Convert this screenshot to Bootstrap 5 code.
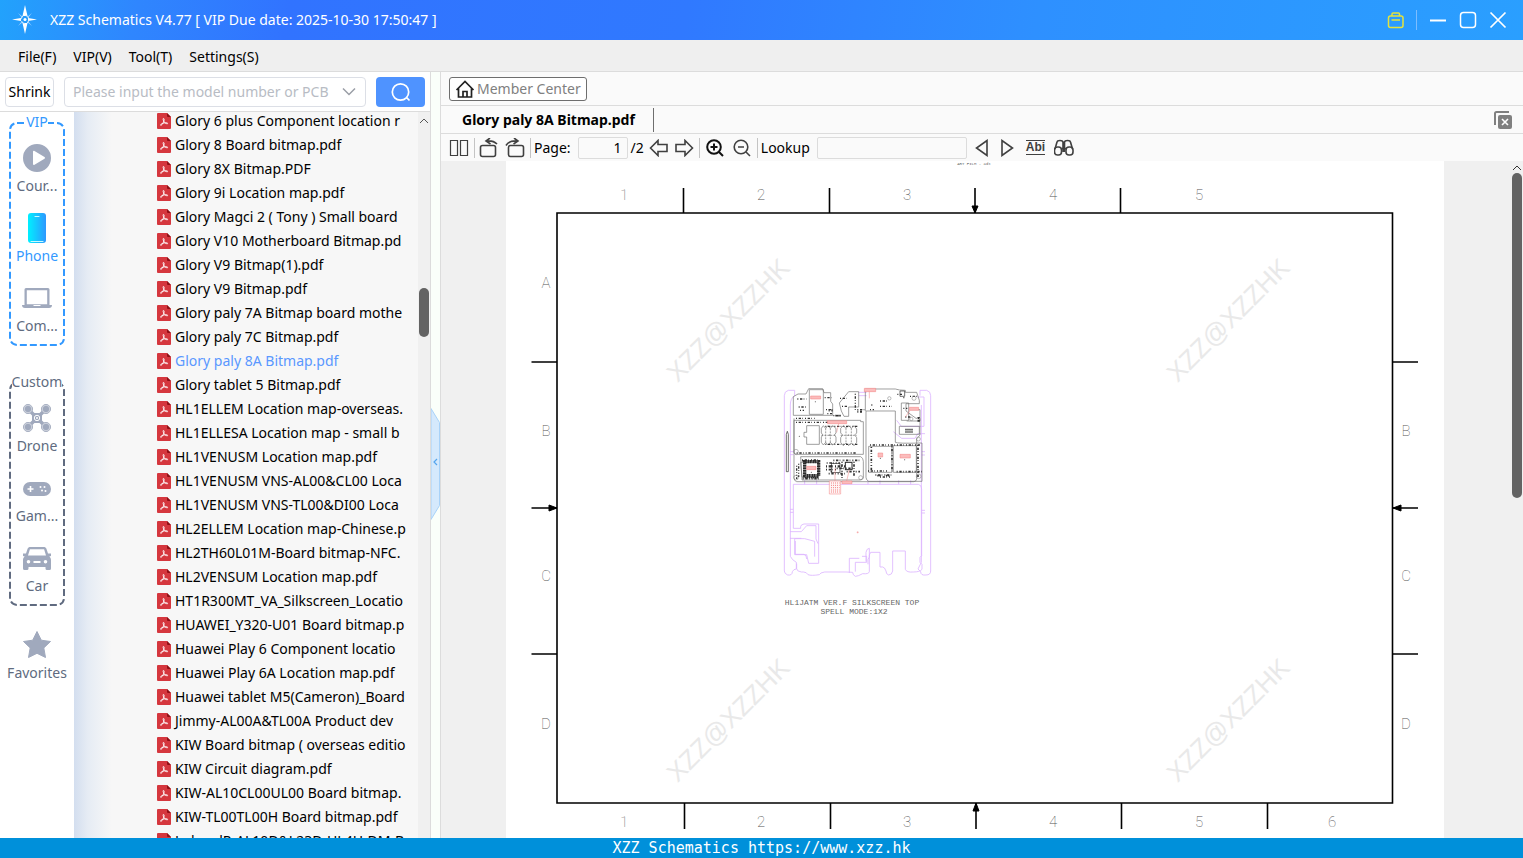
<!DOCTYPE html>
<html lang="en">
<head>
<meta charset="utf-8">
<meta name="viewport" content="width=device-width, initial-scale=1">
<title>XZZ Schematics V4.77</title>
<link href="https://cdn.jsdelivr.net/npm/bootstrap@5.3.0/dist/css/bootstrap.min.css" rel="stylesheet">
<style>
  body { font-family: "Noto Sans", "Open Sans", sans-serif; font-size: 14px; line-height: 20px; color: #000; }
  button { font: inherit; color: inherit; }
  svg { display: block; flex: none; }
  .app-bar { height: 40px; color: #fff; padding: 0 16px 0 12px; background: linear-gradient(100deg, #22a2fc 0, #2f86fe 9%, #3173ff 19%, #3079ff 45%, #2e90ff 68%, #2a9fff 100%); }
  .ghost { background: none; border: 0; padding: 0; }
  .menu-bar { height: 32px; background: #efefef; border-bottom: 1px solid #dcdcdc; padding: 2px 0 0 18px; gap: 17px; }
  .menu-bar a { color: #000; text-decoration: none; }
  .side { width: 431px; border-right: 1px solid #dcdcdc; }
  .side-search { height: 40px; border-bottom: 1px solid #dcdcdc; padding: 0 5px; gap: 10px; }
  .shrink-btn { height: 30px; width: 49px; background: #fff; border: 1px solid #dcdfe6; border-radius: 4px; padding: 1px 0 0; }
  .combo { height: 30px; border: 1px solid #dcdfe6; border-radius: 4px; padding: 0 9px 0 8px; }
  .combo input { border: 0; outline: 0; padding: 1px 0 0; min-width: 0; background: none; }
  .combo input::placeholder { color: #b8bcc4; opacity: 1; }
  .search-btn { height: 30px; width: 49px; border: 0; border-radius: 4px; background: #4f93ff; }
  .rail { width: 74px; color: #606b80; }
  .group-box { width: 56px; margin: 0 auto 26px; padding-bottom: 4px; }
  .group-name { height: 20px; }
  .group-name span { background: #fff; z-index: 1; }
  .group-line { inset: 10px 0 0 0; width: 100%; height: calc(100% - 10px); }
  .group-line rect { fill: none; stroke-width: 2; stroke-dasharray: 7 3; width: calc(100% - 2px); height: calc(100% - 2px); }
  .vip-name, .rail-item.active { color: #3399ff; }
  .rail-item { height: 70px; width: 100%; padding: 11px 0 6px; gap: 3px; position: relative; z-index: 1; white-space: nowrap; }
  .rail-item svg { fill: #a0a9bd; }
  .tree { background: linear-gradient(90deg, #d3deef 0, #e6ecf4 14px, #f7f7f7 38px, #f7f7f7 100%); }
  .tree ul { margin: -3px 8px 0 83px; }
  .tree a { height: 24px; gap: 3px; color: #000; text-decoration: none; white-space: nowrap; }
  .tree a.picked { color: #5a98ff; }
  .track { width: 12px; background: #f0f0f0; padding-top: 5px; }
  .thumb { width: 10px; border-radius: 5px; background: #636363; }
  .side .thumb { height: 49px; margin-top: 163px; }
  .view .track { padding-top: 3px; }
  .view .thumb { height: 325px; margin-top: 1px; }
  .splitter { width: 10px; background: #fafffa; border: 0; border-right: 1px solid #dcdcdc; padding: 18px 0 0; }
  .viewer { background: #fafafa; }
  .center-row { height: 34px; border-bottom: 1px solid #dcdcdc; padding-left: 8px; }
  .center-btn { height: 24px; background: #fff; border: 1px solid #6e6e6e; border-radius: 3px; color: #808080; padding: 0 5px; gap: 2px; }
  .file-row { height: 28px; border-bottom: 1px solid #dcdcdc; padding: 0 11px 0 21px; }
  .file-tab { height: 24px; border-right: 1px solid #6e6e6e; padding-right: 18px; }
  .tools { height: 27px; padding-left: 8px; gap: 5px; }
  .tools input { height: 22px; border: 1px solid #dcdcdc; border-radius: 2px; background: #fafafa; padding: 0 5px; margin-left: 2px; }
  .tools .page-no { width: 50px; margin-right: -2px; }
  .look { width: 150px; }
  .rule { width: 1px; height: 20px; background: #c4c4c4; margin-right: -2px; }
  .title-rule { width: 1px; height: 20px; background: #7dbdff; margin: 0 12px 0 11px; }
  .tools svg { fill: none; stroke: #404040; stroke-width: 1.6; }
  .tools svg.thin { stroke-width: 1.2; }
  .tools svg.strong { stroke: #111; stroke-width: 2; }
  .whole-word { padding: 0 4px; }
  .whole-word span { display: block; border: solid #404040; border-width: 1px 0; font: bold 12px/13px "Liberation Sans", sans-serif; color: #404040; }
  .view { background: #f0f0f0; }
  .sheet { background: #fff; margin: 0 67px 0 65px; width: calc(100% - 132px); }
  .zone { font-family: Roboto, sans-serif; font-weight: 100; font-size: 15px; fill: #555; text-anchor: middle; }
  .plot { font-family: "Liberation Mono", monospace; font-size: 8px; fill: #666; text-anchor: middle; }
  .plot-small { font-size: 4px; }
  .stamp { font-family: "Liberation Sans", sans-serif; font-size: 26px; fill: #e9e9e9; text-anchor: middle; }
  .foot { height: 20px; background: #0090da; color: #fff; font-family: "DejaVu Sans Mono", monospace; font-size: 15px; }
</style>
</head>
<body>
<svg width="0" height="0" class="position-absolute" aria-hidden="true">
  <symbol id="pdf" viewBox="0 0 15 16"><path d="M1 0h9l4 4v11a1 1 0 0 1-1 1H1a1 1 0 0 1-1-1V1a1 1 0 0 1 1-1z" fill="#d5373e"/><path d="M10 0l4 4h-3a1 1 0 0 1-1-1z" fill="#8e1116"/><path d="M6.400 5.500c1.400 0 .6 2.700-.4 4.500-.7 1.300-1.700 2.500-2.300 2.300-.8-.5.700-1.600 2.500-2.100 1.700-.5 4.300-.6 4.500.1.200 1-2.200.3-3.300-1-1-1.200-1.700-3.800-1-3.800z" fill="none" stroke="#fff" stroke-width=".9"/></symbol>
</svg>
<div class="vh-100 d-flex flex-column overflow-hidden">
  <header class="app-bar d-flex align-items-center flex-shrink-0">
    <svg width="26" height="30" viewBox="0 0 26 30"><path d="M13 0l2.500 11h-5zM13 29l-2.500-11h5zM0 14.500l9-1.500v3zM25 14.500l-9-1.500v3z" fill="#fff"/><path d="M6 8l5 4-1 1zM20 8l-5 4 1 1zM6 21l5-4-1-1zM20 21l-5-4 1-1z" fill="#9fd2ff"/><circle cx="13" cy="14.500" r="4" fill="none" stroke="#d5ecff" stroke-dasharray="4 2.300"/><circle cx="13" cy="14.500" r="1.500" fill="#fff"/></svg>
    <span class="ms-2 ps-1">XZZ Schematics V4.77 [ VIP Due date: 2025-10-30 17:50:47 ]</span>
    <button class="ghost ms-auto" aria-label="Toolbox"><svg width="18" height="18" viewBox="0 0 18 18" fill="none" stroke="#e5e33c" stroke-width="1.500"><rect x="1.500" y="5" width="14.500" height="11.500" rx="2"/><path d="M5 5V3a1 1 0 0 1 1-1h5.500a1 1 0 0 1 1 1v2M4.500 9h8.500"/></svg></button>
    <span class="title-rule"></span>
    <button class="ghost" aria-label="Minimize"><svg width="18" height="18"><path d="M1 9.500h16" stroke="#fff" stroke-width="2"/></svg></button>
    <button class="ghost ms-2 ps-1" aria-label="Maximize"><svg width="18" height="18"><rect x="1.500" y="1.500" width="15" height="15" rx="3" fill="none" stroke="#fff" stroke-width="1.500"/></svg></button>
    <button class="ghost ms-2 ps-1" aria-label="Close"><svg width="18" height="18"><path d="M1.500 1.500l15 15m0-15l-15 15" stroke="#fff" stroke-width="1.700"/></svg></button>
  </header>
  <nav class="menu-bar d-flex align-items-center flex-shrink-0">
    <a href="#">File(F)</a><a href="#">VIP(V)</a><a href="#">Tool(T)</a><a href="#">Settings(S)</a>
  </nav>
  <div class="d-flex flex-grow-1 overflow-hidden">
    <aside class="side d-flex flex-column flex-shrink-0">
      <div class="side-search d-flex align-items-center flex-shrink-0">
        <button class="shrink-btn flex-shrink-0">Shrink</button>
        <div class="combo d-flex align-items-center flex-grow-1">
          <input type="text" class="flex-grow-1" placeholder="Please input the model number or PCB" aria-label="Model number">
          <button class="ghost" aria-label="Show models"><svg width="14" height="14" viewBox="0 0 14 14"><path d="M1 3.500l6 6 6-6" fill="none" stroke="#9a9ea6" stroke-width="1.500"/></svg></button>
        </div>
        <button class="search-btn d-flex align-items-center justify-content-center flex-shrink-0" aria-label="Search"><svg width="20" height="20" viewBox="0 0 20 20" fill="none" stroke="#fff" stroke-width="1.700"><circle cx="9.500" cy="10" r="8.200"/><path d="M15.500 15.500l3 3"/></svg></button>
      </div>
      <div class="d-flex flex-grow-1 overflow-hidden">
        <nav class="rail flex-shrink-0">
          <section class="group-box position-relative">
            <svg class="group-line position-absolute"><rect x="1" y="1" rx="7" stroke="#3399ff"/></svg>
            <div class="group-name vip-name d-flex justify-content-center"><span>VIP</span></div>
            <button class="ghost rail-item d-flex flex-column align-items-center"><svg width="30" height="30" viewBox="0 0 30 30"><path fill-rule="evenodd" d="M15 1a14 14 0 1 0 0 28 14 14 0 0 0 0-28zm-4 7.500c0-.8.800-1 1.500-.6l10 6.100c.7.500.7 1.300 0 1.700l-10 6.100c-.7.400-1.500.1-1.500-.7z"/></svg>Cour...</button>
            <button class="ghost rail-item active d-flex flex-column align-items-center"><svg width="30" height="30" viewBox="0 0 30 30"><defs><linearGradient id="ph"><stop stop-color="#00f0ff"/><stop offset="1" stop-color="#2d98ff"/></linearGradient></defs><rect x="6" y="0" width="18" height="30" rx="3" fill="url(#ph)"/><path d="M13 3.500h4M9 28.500h12" stroke="#c9fbff" stroke-width="1.200" stroke-linecap="round"/></svg>Phone</button>
            <button class="ghost rail-item d-flex flex-column align-items-center"><svg width="30" height="30" viewBox="0 0 30 30"><path fill-rule="evenodd" d="M4 5h22a1.500 1.500 0 0 1 1.500 1.500V22h-25V6.500A1.500 1.500 0 0 1 4 5zm.8 2.200v14h20.400v-14zM0 22h11l1 1h6l1-1h11c0 2-1 3-3 3H3c-2 0-3-1-3-3z"/></svg>Com...</button>
          </section>
          <section class="group-box position-relative mb-0">
            <svg class="group-line position-absolute"><rect x="1" y="1" rx="7" stroke="#606b80"/></svg>
            <div class="group-name d-flex justify-content-center"><span>Custom</span></div>
            <button class="ghost rail-item d-flex flex-column align-items-center"><svg width="30" height="30" viewBox="0 0 30 30"><path d="M6 6l6 6v6l-6 6m18-18l-6 6v6l6 6" fill="none" stroke="#a0a9bd" stroke-width="3.500"/><g stroke="#a0a9bd"><circle cx="6" cy="6" r="4.500"/><circle cx="24" cy="6" r="4.500"/><circle cx="6" cy="24" r="4.500"/><circle cx="24" cy="24" r="4.500"/></g><g fill="none" stroke="#fff" stroke-width=".5"><circle cx="6" cy="6" r="3.800"/><circle cx="24" cy="6" r="3.800"/><circle cx="6" cy="24" r="3.800"/><circle cx="24" cy="24" r="3.800"/></g><rect x="10" y="10" width="10" height="10" rx="2"/><circle cx="15" cy="15" r="2.700" fill="none" stroke="#fff"/><circle cx="15" cy="15" r="1" fill="#fff"/></svg>Drone</button>
            <button class="ghost rail-item d-flex flex-column align-items-center"><svg width="30" height="30" viewBox="0 0 30 30"><rect x="1" y="9" width="28" height="14" rx="7"/><path d="M5.500 16h6m-3-3v6" stroke="#fff" stroke-width="1.600"/><g fill="#fff"><circle cx="18.500" cy="14" r="1"/><circle cx="22.500" cy="14" r="1"/><circle cx="20" cy="17.500" r="1"/><circle cx="23.500" cy="18" r="1"/></g></svg>Gam...</button>
            <button class="ghost rail-item d-flex flex-column align-items-center"><svg width="30" height="30" viewBox="0 0 30 30"><path fill-rule="evenodd" d="M8.500 4h13c1.500 0 2.500.6 3 2l1.500 4.500h3v2.500l-1.700.6c1.100.9 1.700 2 1.700 3.400v8.500a1.500 1.500 0 0 1-1.500 1.500h-2.500a1.500 1.500 0 0 1-1.500-1.500V24H6.500v1.500A1.500 1.500 0 0 1 5 27H2.500A1.500 1.500 0 0 1 1 25.500V17c0-1.400.6-2.500 1.700-3.400L1 13v-2.500h3L5.500 6c.5-1.400 1.500-2 3-2zm-.6 2.200L6 12.500h18l-1.900-6.300zM6.500 17a1.800 1.800 0 1 0 0 3.600 1.800 1.800 0 0 0 0-3.600zm17 0a1.800 1.800 0 1 0 0 3.600 1.800 1.800 0 0 0 0-3.600zM11.500 18v2h7v-2z"/></svg>Car</button>
          </section>
          <button class="ghost rail-item d-flex flex-column align-items-center mt-2 pt-3"><svg width="30" height="30" viewBox="0 0 30 30"><path d="M15 1.500l4.300 8.700 9.200 1.300-6.700 6.400 1.700 9.600-8.500-4.200-8.500 4.200 1.700-9.600L1.500 11.500l9.200-1.300z" stroke="#a0a9bd" stroke-linejoin="round"/></svg>Favorites</button>
        </nav>
        <div class="tree flex-grow-1 overflow-hidden">
          <ul class="list-unstyled" id="files"></ul>
        </div>
        <div class="track d-flex flex-column align-items-center flex-shrink-0"><svg width="10" height="8"><path d="M1 6l4-4 4 4" fill="none" stroke="#555"/></svg><div class="thumb"></div></div>
      </div>
    </aside>
    <button class="splitter d-flex align-items-center flex-shrink-0" aria-label="Collapse list"><svg width="9" height="112" viewBox="0 0 9 112"><path d="M0 .5l8.500 14v83L0 111.500z" fill="#d5e9fc" stroke="#a8d2f8"/><path d="M6 51l-3 3 3 3" fill="none" stroke="#55a5ee" stroke-width="1.200"/></svg></button>
    <main class="viewer d-flex flex-column flex-grow-1 overflow-hidden">
      <div class="center-row d-flex align-items-center flex-shrink-0">
        <button class="center-btn d-flex align-items-center"><svg width="20" height="20" viewBox="0 0 20 20" fill="none" stroke="#222" stroke-width="1.700"><path d="M1.500 11L10 2.500l8.500 8.500M3.500 9.500v8.500h13V9.500M8 18v-5.500h4V18"/></svg>Member Center</button>
      </div>
      <div class="file-row d-flex align-items-center flex-shrink-0">
        <div class="file-tab fw-bold d-flex align-items-center">Glory paly 8A Bitmap.pdf</div>
        <button class="ghost ms-auto" aria-label="Close all"><svg width="18" height="18" viewBox="0 0 18 18"><path d="M1 14V2.500A1.500 1.500 0 0 1 2.500 1H15" fill="none" stroke="#808080" stroke-width="2"/><rect x="4" y="4" width="14" height="14" rx="2" fill="#808080"/><path d="M8 8l6 6m0-6l-6 6" stroke="#fff" stroke-width="1.600"/></svg></button>
      </div>
      <div class="tools d-flex align-items-center flex-shrink-0">
        <button class="ghost" aria-label="Two pages"><svg class="thin" width="20" height="18" viewBox="0 0 20 18"><path d="M1.500 1.500h7v15h-7zM11.500 1.500h7v15h-7z"/></svg></button>
        <span class="rule"></span>
        <button class="ghost" aria-label="Rotate left"><svg width="21" height="20" viewBox="0 0 21 20"><rect x="2.500" y="7.500" width="15" height="11" rx="2"/><path d="M19 6C16 3 13 2.500 8.500 3M12 0L8 3l4.500 3"/></svg></button>
        <button class="ghost" aria-label="Rotate right"><svg width="21" height="20" viewBox="0 0 21 20"><rect x="4.500" y="7.500" width="15" height="11" rx="2"/><path d="M2 7.500C4.500 3 8.500 2.500 14 3M10 0l4 3-4.500 3"/></svg></button>
        <span class="rule"></span>
        <label for="pageNo">Page:</label>
        <input id="pageNo" type="text" class="page-no text-end" value="1">
        <span>/2</span>
        <button class="ghost" aria-label="Previous page"><svg width="20" height="18" viewBox="0 0 20 18"><path d="M1.500 9l7.500-7.500v4h9v7H9v4z"/></svg></button>
        <button class="ghost" aria-label="Next page"><svg width="20" height="18" viewBox="0 0 20 18"><path d="M18.500 9L11 1.500v4H2v7h9v4z"/></svg></button>
        <span class="rule"></span>
        <button class="ghost" aria-label="Zoom in"><svg class="strong" width="22" height="18" viewBox="-3 0 22 18"><circle cx="8" cy="8" r="6.800"/><path d="M13 13l4 4M4.500 8h7M8 4.500v7"/></svg></button>
        <button class="ghost" aria-label="Zoom out"><svg width="22" height="18" viewBox="-3 0 22 18"><circle cx="8" cy="8" r="6.800"/><path d="M13 13l4 4M5 8h6"/></svg></button>
        <span class="rule"></span>
        <label for="look">Lookup</label>
        <input id="look" type="text" class="look">
        <button class="ghost" aria-label="Find previous"><svg width="20" height="18" viewBox="-3 0 20 18"><path d="M12 1.500v15L1.500 9z"/></svg></button>
        <button class="ghost" aria-label="Find next"><svg width="20" height="18" viewBox="-3 0 20 18"><path d="M2 1.500v15L12.500 9z"/></svg></button>
        <button class="ghost whole-word"><span>Abi</span></button>
        <button class="ghost" aria-label="Find in list"><svg width="22" height="18" viewBox="1 0 22 18"><rect x="1.500" y="8" width="7" height="8" rx="3"/><rect x="13" y="8" width="7" height="8" rx="3"/><path d="M2 10L4 3c.4-2 5.500-2 6 0v10M19.500 10L17.500 3c-.4-2-5.500-2-6 0v10M8.500 9.500H13"/></svg></button>
      </div>
      <div class="view d-flex flex-grow-1 overflow-hidden">
        <div class="flex-grow-1 overflow-hidden">
<svg class="sheet" viewBox="506 161 938 680" role="img" aria-label="Board silkscreen drawing">
  <text x="974" y="165" class="plot plot-small">ART FILM - adt</text>
  <g class="stamp">
    <text transform="translate(728 320) rotate(-45)" y="9">XZZ@XZZHK</text>
    <text transform="translate(1228 320) rotate(-45)" y="9">XZZ@XZZHK</text>
    <text transform="translate(728 720) rotate(-45)" y="9">XZZ@XZZHK</text>
    <text transform="translate(1228 720) rotate(-45)" y="9">XZZ@XZZHK</text>
  </g>
  <g fill="none" stroke="#000" stroke-width="1.600">
    <path d="M557 213h835.500v590h-835.500zM683.500 188v25M829.500 188v25M975 188v25M1120.500 188v25M684.500 803v26M830.500 803v26M976 803v26M1121.500 803v26M1267.500 803v26M531.500 362h26M531.500 508h26M531.500 654h26M1392 362h26M1392 508h26M1392 654h26"/>
    <path fill="#000" stroke-width="1" d="M975 213l-3-7h6zM976 803l-3 8h6zM557 508l-8-3v6zM1393 508l8-3v6z"/>
  </g>
  <g class="zone">
    <text x="624" y="200">1</text><text x="761" y="200">2</text><text x="907" y="200">3</text><text x="1053" y="200">4</text><text x="1199" y="200">5</text>
    <text x="624" y="827">1</text><text x="761" y="827">2</text><text x="907" y="827">3</text><text x="1053" y="827">4</text><text x="1199" y="827">5</text><text x="1332" y="827">6</text>
    <text x="546" y="288">A</text><text x="546" y="436">B</text><text x="546" y="581">C</text><text x="546" y="729">D</text>
    <text x="1406" y="436">B</text><text x="1406" y="581">C</text><text x="1406" y="729">D</text>
  </g>
  <!-- board outline and parts, drawn at three units to the pixel -->
  <g transform="translate(770 375) scale(.33333)" fill="none" stroke-width="2.500">
    <g stroke="#dcb4ff">
      <path d="M74 62V46H55q-12 3-12 16v526q0 8 10 12 14 2 14-10 4-8 12-8v-20l-11-8-7-10V90q0-20 13-28zM450 62V46h20q12 3 12 16v526q0 12-14 12-16 2-16-10l-8-8 10-20V90"/>
      <path d="M70 328h375q10 2 10 14v200l-5 5v15l6 6v15q-6 8-26 8-20 2-24-8v-55h-38v60q-2 12-12 12-8-2-8-12-4-12-10-12h-8v-44h-28l-4 8v50q-2 8-20 6-14 8-22 8-8-4-8-12l-20-1h-64q-14 2-16 8-24 4-34 0-4-8-14-8H94q-14-2-14-10v-15M70 328v132h22v-5q0-6 10-8h44v118h-30l-6-26H74v-48h30l30 8v46M60 470h34l16-18h28v40l6 14M60 490h34M76 498v40h26q8 2 8 14M238 594v-44h30M256 590v-28h34v-18h-14M288 560V532q2-12 10-12v26l-4 8v14M104 316v12M140 316v12M294 316v12M330 316v12M386 316v12M422 316v12M60 403h10M60 412h10M60 230h10M60 239h10M455 406h10M455 414h10M380 136l14 18h68V66h-20M370 170l25 20h40l8-14h22M455 230h10M455 240h10M266 52h24M266 62h24"/>
    </g>
    <g stroke="#707070" stroke-width="2">
      <path d="M70 65l14-8h24l8-16h42l4 12h20v26l6 8v34H70zM286 108v-66h90q10 4 30 4v6h34l8 24v10h-40v22l30 22h12v50l-10 12v120q0 6-8 8H80q-8-2-8-12V130M72 136h200v4h8v98H84q-12 4-12-10zM92 245h180q8 4 8 14v50q-2 6-10 6H96zM288 108h88v94q4 4 80 2v115H296q-8-4-8-12zM118 44h42v74h-42zM208 84l28-34h30v46h-30v28h-14l-8-16zM110 152h38v56h-38v-22h-8v-14h8zM296 214h70v78h-70zM370 212h69v80h-69zM388 154h60v24h-60zM394 84h22v52h-22zM422 104h28v34h-40M92 262h54v44H96z"/>
      <path d="M154 160l6-8 7 8 7-8 7 8 7-8 10 8v14l-5 6 5 6v16l-10 8-7-8-7 8-7-8-7 8-6-8v-16l5-6-5-6zM212 160l8-8 8 8 8-8 8 8 8-8 8 10v12l-6 6 6 8v14l-8 10-8-8-8 8-8-8-8 8-8-10v-14l6-8-6-6z"/>
      <path d="M167 160v42M181 160v42M228 160v42M244 160v42M154 181h44M212 181h48" stroke-dasharray="6 3"/>
    </g>
    <g stroke="#333" stroke-dasharray="3 5 7 4 2 6">
      <path d="M82 72h28M86 96h26M90 106h12M78 130h56M164 68h20M168 104h16M172 116h14M210 70h20M216 94h16M190 122h26M256 56v50M262 104h22M304 90h6M300 104h12M330 78h22M330 94h36M382 58h14M400 68h6M420 64h24M444 130h8M400 100h12M406 126h18M166 154h96M166 208h96M78 142h120M80 234h180M300 210h150M80 272v40M86 266v40" stroke-width="4"/>
      <path d="M190 256h28M170 264h40M220 256h50M168 284h30M200 280h50M176 296h50M230 290h40M294 288h60M316 300h50M380 290h76M330 306h30M216 260v48M252 260v46M184 262v32M304 216v70M366 214v80M444 210v100" stroke-width="5"/>
      <path d="M96 256h50M98 310h50M168 274h60M262 110h14M176 106h12M446 126v14" stroke-width="7"/>
    </g>
    <g stroke="#2b2b2b"><rect x="104" y="260" width="42" height="42" stroke-width="10" stroke-dasharray="4 1"/><rect x="184" y="266" width="26" height="26" stroke-width="2"/><rect x="226" y="262" width="20" height="22" stroke-width="3"/><path d="M390 48h14v16h-14zM49 290V178l3-9 3 9v112z" stroke-width="2"/><path d="M104 308h42M196 122h18M322 302h12M348 302h12M406 164h22M406 171h22" stroke-width="5" stroke-dasharray="4 2"/></g>
    <g stroke="#777" stroke-width="1.500"><circle cx="432" cy="70" r="6"/><circle cx="78" cy="230" r="7"/><circle cx="445" cy="192" r="6"/><circle cx="78" cy="308" r="7"/><circle cx="358" cy="70" r="5"/><circle cx="446" cy="304" r="7"/><circle cx="272" cy="308" r="6"/><circle cx="424" cy="132" r="5"/></g>
    <g stroke="#f37f7f" fill="#fbbcbc" stroke-width="1.500">
      <path d="M122 63h30v9h-30zM283 40h34v10h-34zM172 137h58v9h-58zM418 97h28v9h-28zM110 274h28v10h-28zM324 234h14v12h-14zM390 238h31v11h-31zM216 318h30v8h-30z"/>
      <path d="M178 318h34v39h-34z" fill="#fff5f5"/><path d="M183 324h26M183 331h26M183 338h26M183 345h26M183 351h26" stroke-width="3" stroke-dasharray="3 3"/>
      <path d="M206 146l-6 26M195 280v38M238 284l-8 34M298 50v20M420 106l-14 20M260 472h6M263 469v6" fill="none"/>
    </g>
    <g fill="#333"><circle cx="331" cy="250" r="1.500"/><circle cx="404" cy="254" r="1.500"/><circle cx="136" cy="80" r="1.500"/><circle cx="124" cy="292" r="1.500"/><circle cx="88" cy="184" r="1.500"/><circle cx="178" cy="180" r="1.500"/><circle cx="236" cy="180" r="1.500"/></g>
  </g>
  <g class="plot"><text x="852" y="605">HL1JATM VER.F SILKSCREEN TOP</text><text x="854" y="614">SPELL MODE:1X2</text></g>
</svg>
        </div>
        <div class="track d-flex flex-column align-items-center flex-shrink-0"><svg width="10" height="8"><path d="M1 6l4-4 4 4" fill="none" stroke="#333"/></svg><div class="thumb"></div></div>
      </div>
    </main>
  </div>
  <footer class="foot text-center flex-shrink-0">XZZ Schematics https://www.xzz.hk</footer>
</div>
<script src="https://cdn.jsdelivr.net/npm/bootstrap@5.3.0/dist/js/bootstrap.bundle.min.js"></script>
<script>
  const names = ["Glory 6 plus Component location r", "Glory 8 Board bitmap.pdf", "Glory 8X Bitmap.PDF", "Glory 9i Location map.pdf", "Glory Magci 2 ( Tony ) Small board", "Glory V10 Motherboard Bitmap.pd", "Glory V9 Bitmap(1).pdf", "Glory V9 Bitmap.pdf", "Glory paly 7A Bitmap board mothe", "Glory paly 7C Bitmap.pdf", "Glory paly 8A Bitmap.pdf", "Glory tablet 5 Bitmap.pdf", "HL1ELLEM Location map-overseas.", "HL1ELLESA Location map - small b", "HL1VENUSM Location map.pdf", "HL1VENUSM VNS-AL00&CL00 Loca", "HL1VENUSM VNS-TL00&DI00 Loca", "HL2ELLEM Location map-Chinese.p", "HL2TH60L01M-Board bitmap-NFC.", "HL2VENSUM Location map.pdf", "HT1R300MT_VA_Silkscreen_Locatio", "HUAWEI_Y320-U01 Board bitmap.p", "Huawei Play 6 Component locatio", "Huawei Play 6A Location map.pdf", "Huawei tablet M5(Cameron)_Board", "Jimmy-AL00A&TL00A Product dev", "KIW Board bitmap ( overseas editio", "KIW Circuit diagram.pdf", "KIW-AL10CL00UL00 Board bitmap.", "KIW-TL00TL00H Board bitmap.pdf", "LukeedR-AL10D&L23D-HL4H-DM-B"];
  const list = document.getElementById("files");
  names.forEach((name, i) => {
    const li = document.createElement("li"), a = document.createElement("a");
    a.href = "#";
    a.className = "d-flex align-items-center" + (i === 10 ? " picked" : "");
    a.innerHTML = '<svg width="15" height="16"><use href="#pdf"/></svg>';
    a.append(name);
    li.append(a);
    list.append(li);
  });
</script>
</body>
</html>
